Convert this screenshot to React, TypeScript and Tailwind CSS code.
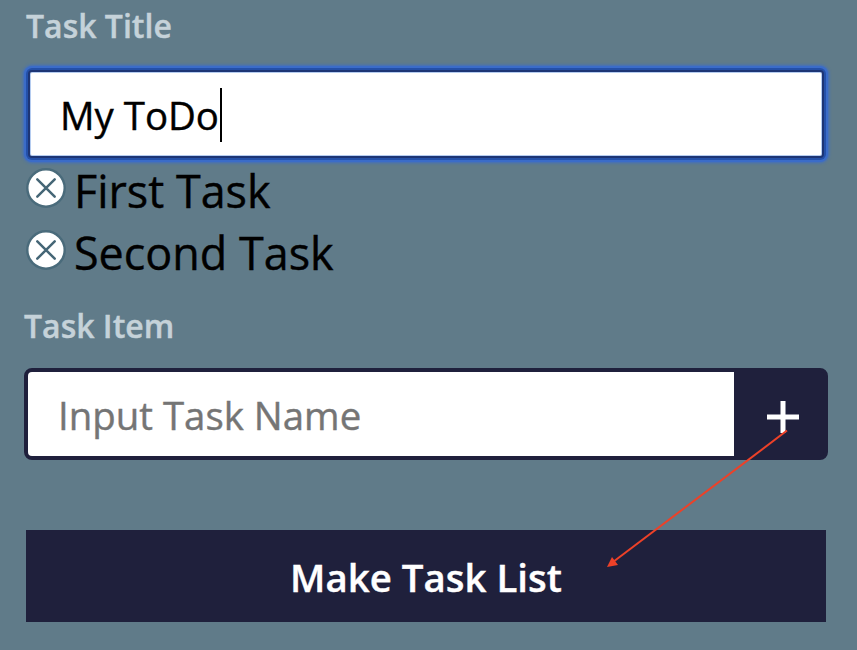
import React from 'react';

function Remove() {
  return (
    <svg className="block h-10 w-10 shrink-0" viewBox="0 0 40 40" fill="none">
      <circle cx="20" cy="20" r="18.7" fill="white" stroke="#4a6b7b" strokeWidth="2.4" />
      <path d="M11.3 11.3 28.7 28.7M28.7 11.3 11.3 28.7" stroke="#456676" strokeWidth="2.5" strokeLinecap="round" />
    </svg>
  );
}

function Task({ name }: { name: string }) {
  return (
    <li className="flex h-[62px] items-start gap-2">
      <Remove />
      <span className="-mt-2 text-[44.9px] leading-[62px] text-black [-webkit-text-stroke:0.4px_currentColor]">{name}</span>
    </li>
  );
}

export default function App() {
  return (
    <main className="relative h-[650px] w-[857px] overflow-hidden bg-[#607b89] pl-6 font-['Open_Sans',sans-serif]">
      <div className="h-[68px] pl-[2px] pt-1 text-[32px] font-semibold leading-[44px] text-[#c5d2d9] [-webkit-text-stroke:0.4px_currentColor]">Task Title</div>
      <div className="ml-[2px] flex h-[92px] w-[800px] rounded-[6px] bg-[#2450a8] p-[2px] shadow-[0_0_0_2px_#3b6cc8,0_0_3px_3px_#3f6fc4]">
        <div className="flex flex-1 items-center rounded-[4px] border-2 border-[#1d3575] bg-white pl-[30px] text-[38.4px] text-black shadow-[inset_0_0_0_1px_#b5ccf0]">
          <span className="pt-1 [-webkit-text-stroke:0.4px_currentColor]">My ToDo</span><span className="ml-px mt-[2px] h-[54px] w-[2px] bg-black" />
        </div>
      </div>
      <ul className="h-[144px] pl-[2px] pt-2">
        <Task name="First Task" />
        <Task name="Second Task" />
      </ul>
      <div className="h-[64px] text-[32px] font-semibold leading-[44px] text-[#c5d2d9] [-webkit-text-stroke:0.4px_currentColor]">Task Item</div>
      <div className="flex h-[92px] w-[804px] rounded-lg border-4 border-[#1f203c] bg-[#1f203c]">
        <div className="w-[706px] rounded-l-[4px] bg-white pl-[30px] text-[38.4px] leading-[86px] text-[#757575] [-webkit-text-stroke:0.4px_currentColor]">Input Task Name</div>
        <div className="flex flex-1 items-center justify-center pl-2 pt-1.5">
          <svg className="h-8 w-8" viewBox="0 0 32 32"><path d="M16 0V32M0 16H32" stroke="white" strokeWidth="5" /></svg>
        </div>
      </div>
      <button className="ml-[2px] mt-[70px] block h-[92px] w-[800px] bg-[#1f203c] pt-1 text-[38.4px] font-semibold text-white [-webkit-text-stroke:0.4px_currentColor]">Make Task List</button>
      <svg className="absolute left-0 top-0 h-[650px] w-[857px]" viewBox="0 0 857 650">
        <path d="M787 430.5 613 562" stroke="#ed4128" strokeWidth="2" />
        <path d="m607 567 5-10 6 8Z" fill="#ed4128" />
      </svg>
    </main>
  );
}
